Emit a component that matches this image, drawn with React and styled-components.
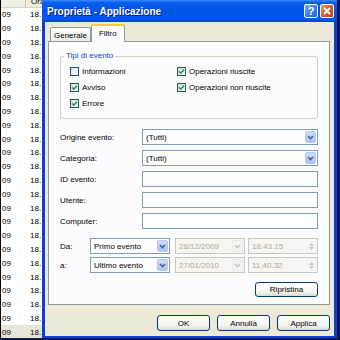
import styled, { createGlobalStyle } from 'styled-components'

const GlobalStyle = createGlobalStyle`
  html, body {
    margin: 0;
    padding: 0;
    background: #fff;
  }
  body {
    font-family: "Liberation Sans", Arial, sans-serif;
  }
`

const Screen = styled.div`
  width: 340px;
  height: 340px;
  box-sizing: border-box;
  display: flex;
  overflow: hidden;
  border-left: 1px solid #000;
  border-bottom: 2px solid #0b1650;
  font-family: "Liberation Sans", Arial, sans-serif;
  font-size: 8px;
  color: #000;
`

const EventList = styled.div`
  width: 41px;
  flex: none;
  display: flex;
  flex-direction: column;
  overflow: hidden;
  background: #fff;
`

const ListHeader = styled.div`
  height: 8px;
  flex: none;
  display: flex;
  align-items: flex-end;
  overflow: hidden;
  box-sizing: border-box;
  background: #efeee4;
  border-bottom: 1px solid #d6d2c2;
`

const HeaderCell = styled.div`
  width: ${(p) => p.$w}px;
  flex: none;
  box-sizing: border-box;
  height: 11px;
  line-height: 11px;
  padding-left: 5px;
  border-right: ${(p) => (p.$divider ? '1px solid #c7c5b2' : 'none')};
  white-space: nowrap;
`

const ListRow = styled.div`
  height: 13.8px;
  flex: none;
  display: flex;
  align-items: center;
  background: ${(p) => (p.$selected ? '#e7e5d9' : 'transparent')};
`

const ListCell = styled.div`
  width: ${(p) => p.$w}px;
  flex: none;
  padding-left: ${(p) => p.$pad}px;
  box-sizing: border-box;
  white-space: nowrap;
  overflow: hidden;
`

const Dialog = styled.div`
  flex: 1;
  min-width: 0;
  display: flex;
  flex-direction: column;
  border-right: 3px solid #0a1650;
`

const TitleBar = styled.div`
  height: 22px;
  flex: none;
  display: flex;
  align-items: center;
  padding: 0 3px 0 5px;
  background: linear-gradient(#3a8cff 0%, #0a5eec 12%, #0055e5 50%, #0059ec 85%, #0042c4 100%);
`

const Title = styled.div`
  flex: 1;
  color: #fff;
  font-weight: bold;
  font-size: 10px;
  text-shadow: 1px 1px #0a1883;
  white-space: nowrap;
`

const CaptionButton = styled.div`
  width: 14px;
  height: 14px;
  box-sizing: border-box;
  border: 1px solid #fff;
  border-radius: 2px;
  display: flex;
  align-items: center;
  justify-content: center;
  color: #fff;
  font-weight: bold;
  font-size: 11px;
  background: ${(p) =>
    p.$close
      ? 'linear-gradient(135deg, #f09a78, #de5a32 45%, #c5411a)'
      : 'linear-gradient(135deg, #75aefb, #3e86f5 45%, #2360e0)'};
  & + & {
    margin-left: 2px;
  }
`

const Frame = styled.div`
  flex: 1;
  display: flex;
  flex-direction: column;
  min-height: 0;
  background: #ece9d8;
  border-left: 3px solid #0a3fd2;
  border-right: 3px solid #0a3fd2;
  border-bottom: 2px solid #0a3fd2;
  padding: 3px 4px 4px 3px;
`

const TabStrip = styled.div`
  height: 17px;
  flex: none;
  display: flex;
  align-items: flex-end;
  padding-left: 2px;
  margin-bottom: -1px;
  position: relative;
  z-index: 1;
`

const Tab = styled.div`
  box-sizing: border-box;
  height: ${(p) => (p.$active ? 18 : 15)}px;
  padding: ${(p) => (p.$active ? '2px 7px 0' : '2px 3px 0')};
  line-height: 12px;
  border: 1px solid #919b9c;
  border-bottom: ${(p) => (p.$active ? 'none' : '1px solid #919b9c')};
  border-top: ${(p) => (p.$active ? '2px solid #ffc73c' : '1px solid #919b9c')};
  border-radius: 2px 2px 0 0;
  background: ${(p) => (p.$active ? '#fcfcfe' : 'linear-gradient(#ffffff, #ecebe5)')};
`

const Panel = styled.div`
  flex: none;
  display: flex;
  flex-direction: column;
  background: #fcfcfe;
  border: 1px solid #919b9c;
  padding: 9px 11px 7px 11px;
`

const GroupBox = styled.fieldset`
  margin: 0;
  padding: 2px 10px 7px 3px;
  border: 1px solid #d0d0bf;
  border-radius: 3px;
  min-width: 0;
`

const Legend = styled.legend`
  padding: 0 2px;
  line-height: 10px;
  color: #0046d5;
`

const CheckGrid = styled.div`
  display: grid;
  grid-template-columns: 107px auto;
  grid-auto-rows: 16px;
  padding-left: 6px;
`

const CheckItem = styled.div`
  display: flex;
  align-items: center;
  gap: 3px;
  white-space: nowrap;
`

const CheckBox = styled.div`
  width: 9px;
  height: 9px;
  box-sizing: border-box;
  border: 1px solid #1c5180;
  background: linear-gradient(135deg, #dcdcd7, #ffffff);
  display: flex;
  align-items: center;
  justify-content: center;
`

const FieldRow = styled.div`
  height: 16px;
  display: flex;
  align-items: center;
  margin-top: ${(p) => p.$top ?? 5}px;
`

const Label = styled.div`
  width: ${(p) => p.$w}px;
  flex: none;
  white-space: nowrap;
`

const Field = styled.div`
  box-sizing: border-box;
  height: 16px;
  width: ${(p) => (p.$w ? `${p.$w}px` : 'auto')};
  flex: ${(p) => (p.$w ? 'none' : '1')};
  margin-left: ${(p) => p.$gap ?? 0}px;
  display: flex;
  align-items: center;
  padding: 1px;
  border: 1px solid ${(p) => (p.$disabled ? '#c9c7ba' : '#7f9db9')};
  background: ${(p) => (p.$disabled ? '#f6f5ef' : '#fff')};
  color: ${(p) => (p.$disabled ? '#aca899' : '#000')};
`

const FieldText = styled.div`
  flex: 1;
  padding-left: 2px;
  white-space: nowrap;
  overflow: hidden;
`

const DropButton = styled.div`
  width: 11px;
  height: 100%;
  flex: none;
  box-sizing: border-box;
  border-radius: 2px;
  display: flex;
  align-items: center;
  justify-content: center;
  border: 1px solid ${(p) => (p.$disabled ? '#ebe9e0' : '#b4c8f6')};
  background: ${(p) =>
    p.$disabled ? '#f4f3ee' : 'linear-gradient(#d1defc, #b9ccf8 60%, #aec3f4)'};
`

const Spinner = styled.div`
  width: 9px;
  height: 100%;
  flex: none;
  display: flex;
  flex-direction: column;
  align-items: center;
  justify-content: center;
  gap: 1px;
`

const ResetRow = styled.div`
  display: flex;
  justify-content: flex-end;
  margin-top: 9px;
`

const Button = styled.div`
  box-sizing: border-box;
  width: ${(p) => p.$w}px;
  height: ${(p) => p.$h}px;
  display: flex;
  align-items: center;
  justify-content: center;
  border: 1px solid #003c74;
  border-radius: 3px;
  background: linear-gradient(#ffffff, #f3f3ef 70%, #dcd8cd);
`

const ButtonRow = styled.div`
  display: flex;
  justify-content: flex-end;
  gap: 7px;
  margin-top: 10px;
`

const Chevron = ({ color }) => (
  <svg width="7" height="5" viewBox="0 0 7 5">
    <path d="M1 1 L3.5 3.5 L6 1" fill="none" stroke={color} strokeWidth="1.6" />
  </svg>
)

const Check = () => (
  <svg width="7" height="7" viewBox="0 0 7 7">
    <path d="M1 3.4 L2.8 5.2 L6 1.6" fill="none" stroke="#21a121" strokeWidth="1.6" />
  </svg>
)

const Combo = ({ text, w, gap, disabled }) => (
  <Field $w={w} $gap={gap} $disabled={disabled}>
    <FieldText>{text}</FieldText>
    <DropButton $disabled={disabled}>
      <Chevron color={disabled ? '#c9c7ba' : '#4d6185'} />
    </DropButton>
  </Field>
)

const TimeBox = ({ text, gap }) => (
  <Field $w={70} $gap={gap} $disabled>
    <FieldText>{text}</FieldText>
    <Spinner>
      <svg width="5" height="3" viewBox="0 0 5 3">
        <path d="M0 3 L2.5 0 L5 3 Z" fill="#c9c7ba" />
      </svg>
      <svg width="5" height="3" viewBox="0 0 5 3">
        <path d="M0 0 L2.5 3 L5 0 Z" fill="#c9c7ba" />
      </svg>
    </Spinner>
  </Field>
)

const checks = [
  { label: 'Informazioni', on: false },
  { label: 'Operazioni riuscite', on: true },
  { label: 'Avviso', on: true },
  { label: 'Operazioni non riuscite', on: true },
  { label: 'Errore', on: true },
]

const rows = Array.from({ length: 24 })

export default function App() {
  return (
    <>
      <GlobalStyle />
      <Screen>
        <EventList>
          <ListHeader>
            <HeaderCell $w={25} $divider />
            <HeaderCell $w={20}>Ora</HeaderCell>
          </ListHeader>
          {rows.map((_, i) => (
            <ListRow key={i} $selected={i === rows.length - 1}>
              <ListCell $w={25} $pad={1}>09</ListCell>
              <ListCell $w={16} $pad={4}>18.</ListCell>
            </ListRow>
          ))}
        </EventList>

        <Dialog>
          <TitleBar>
            <Title>Proprietà - Applicazione</Title>
            <CaptionButton>?</CaptionButton>
            <CaptionButton $close>
              <svg width="8" height="8" viewBox="0 0 8 8">
                <path d="M1 1 L7 7 M7 1 L1 7" stroke="#fff" strokeWidth="1.8" />
              </svg>
            </CaptionButton>
          </TitleBar>

          <Frame>
            <TabStrip>
              <Tab>Generale</Tab>
              <Tab $active>Filtro</Tab>
            </TabStrip>

            <Panel>
              <GroupBox>
                <Legend>Tipi di evento</Legend>
                <CheckGrid>
                  {checks.map((c) => (
                    <CheckItem key={c.label}>
                      <CheckBox>{c.on && <Check />}</CheckBox>
                      {c.label}
                    </CheckItem>
                  ))}
                </CheckGrid>
              </GroupBox>

              <FieldRow $top={10}>
                <Label $w={82}>Origine evento:</Label>
                <Combo text="(Tutti)" />
              </FieldRow>
              <FieldRow>
                <Label $w={82}>Categoria:</Label>
                <Combo text="(Tutti)" />
              </FieldRow>
              <FieldRow>
                <Label $w={82}>ID evento:</Label>
                <Field />
              </FieldRow>
              <FieldRow>
                <Label $w={82}>Utente:</Label>
                <Field />
              </FieldRow>
              <FieldRow>
                <Label $w={82}>Computer:</Label>
                <Field />
              </FieldRow>

              <FieldRow $top={9}>
                <Label $w={30}>Da:</Label>
                <Combo text="Primo evento" w={80} />
                <Combo text="28/12/2009" w={70} gap={5} disabled />
                <TimeBox text="18.43.15" gap={3} />
              </FieldRow>
              <FieldRow $top={3}>
                <Label $w={30}>a:</Label>
                <Combo text="Ultimo evento" w={80} />
                <Combo text="27/01/2010" w={70} gap={5} disabled />
                <TimeBox text="11.40.32" gap={3} />
              </FieldRow>

              <ResetRow>
                <Button $w={63} $h={15}>Ripristina</Button>
              </ResetRow>
            </Panel>

            <ButtonRow>
              <Button $w={53} $h={16}>OK</Button>
              <Button $w={53} $h={16}>Annulla</Button>
              <Button $w={53} $h={16}>Applica</Button>
            </ButtonRow>
          </Frame>
        </Dialog>
      </Screen>
    </>
  )
}
